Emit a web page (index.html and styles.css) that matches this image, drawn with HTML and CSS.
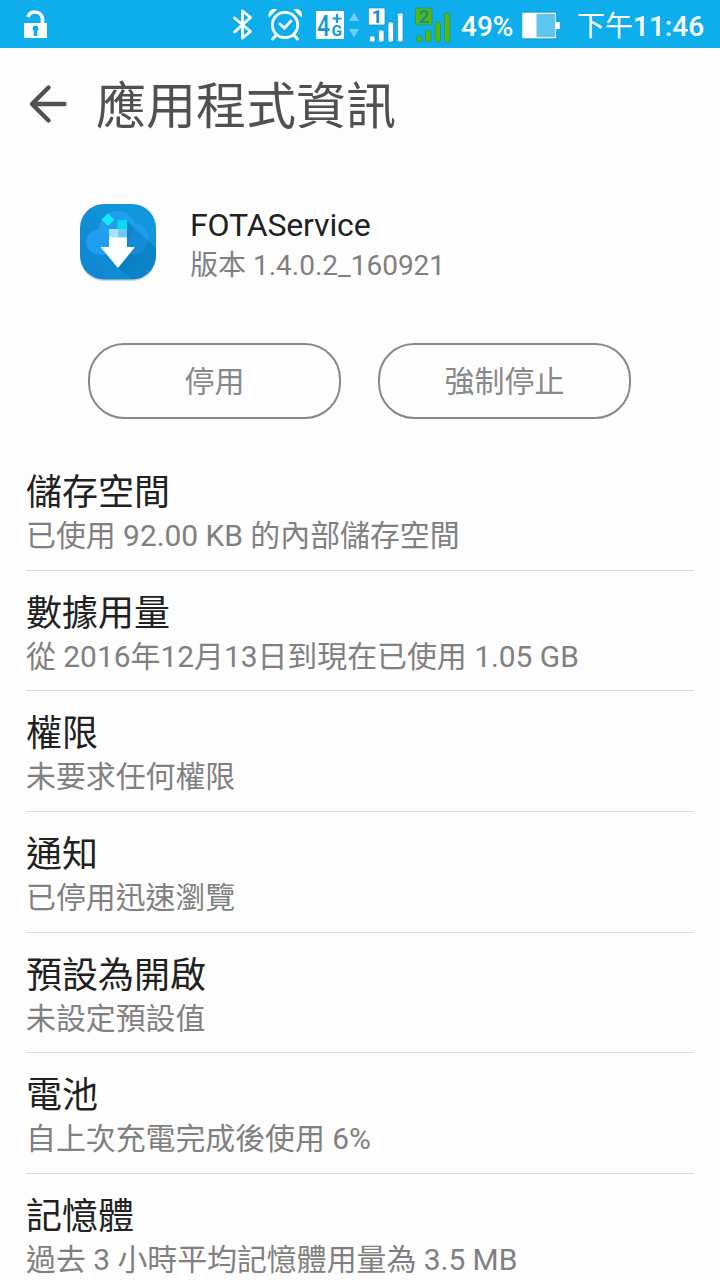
FILE: index.html
```html
<!DOCTYPE html>
<html lang="zh-Hant">
<head>
    <meta charset="utf-8">
    <title>應用程式資訊</title>
    <link rel="stylesheet" href="styles.css">
</head>
<body>
<div class="statusbar">
    <svg class="lock" width="26" height="48" viewBox="0 0 26 48">
        <path d="M5 17c1-3 3.500-5 6.500-5 4.500 0 8 3 8 7.500V24" fill="none" stroke="#fff" stroke-width="3.600"/>
        <path fill="#fff" fill-rule="evenodd" d="M1 23h23v15H1zM12.500 25.500a3 3 0 0 0-1.800 5.400V36h3.600v-5.100a3 3 0 0 0-1.800-5.400z"/>
    </svg>
    <svg class="bluetooth" width="24" height="48" viewBox="0 0 24 48">
        <path d="M3.500 18l16 13.500L11.500 38V11l8 6.500L3.500 32" fill="none" stroke="#fff" stroke-width="2.800" stroke-linejoin="round" stroke-linecap="round"/>
    </svg>
    <svg class="alarm" width="36" height="48" viewBox="0 0 36 48">
        <g fill="none" stroke="#fff" stroke-linecap="round">
            <circle cx="18" cy="25" r="12.700" stroke-width="2.800"/>
            <path d="M9 35.500L5.500 39M27 35.500l3.500 3.500" stroke-width="3"/>
            <path d="M13 24l4.500 4L24 21" stroke-width="2.800"/>
        </g>
        <path fill="#fff" d="M2 17.500c-2-5 2.500-10 8-8zM34.500 17.500c2-5-2.500-10-8-8z"/>
    </svg>
    <svg class="network" width="44" height="48" viewBox="0 0 44 48">
        <rect x="1" y="11" width="28" height="28" rx="1" fill="#fff"/>
        <g fill="#1499d0" class="tag">
            <text class="four" x="2" y="35.500" font-size="29" textLength="13" lengthAdjust="spacingAndGlyphs">4</text>
            <text x="16.500" y="36" font-size="15" textLength="10.500" lengthAdjust="spacingAndGlyphs">G</text>
        </g>
        <path d="M22 14v9M17.500 18.500h9" stroke="#1499d0" stroke-width="2.200"/>
        <path fill="#70cdf2" d="M34 21l5-8.500 5 8.500zM34 29h10l-5 8.500z"/>
    </svg>
    <svg class="signal" width="38" height="48" viewBox="0 0 38 48">
        <g fill="#fff" stroke="#168fc6" stroke-width=".7">
            <rect x="1.500" y="8" width="16.500" height="17" rx="1"/>
            <rect x="2.500" y="36" width="5.500" height="6" rx="2"/>
            <rect x="11.500" y="30" width="5.500" height="12" rx="2"/>
            <rect x="21" y="22" width="5.500" height="20" rx="2"/>
            <rect x="30.500" y="13" width="5.500" height="29" rx="2"/>
        </g>
        <text class="tag" x="4.500" y="23" font-size="19" fill="#1790c8">1</text>
    </svg>
    <svg class="signal signal2" width="38" height="48" viewBox="0 0 38 48">
        <g fill="#55b90c" stroke="#168f92" stroke-width=".7">
            <rect x="1.500" y="8" width="16.500" height="17" rx="1"/>
            <rect x="2.500" y="36" width="5.500" height="6" rx="2"/>
            <rect x="11.500" y="30" width="5.500" height="12" rx="2"/>
            <rect x="21" y="22" width="5.500" height="20" rx="2"/>
            <rect x="30.500" y="13" width="5.500" height="29" rx="2"/>
        </g>
        <text class="tag" x="4.500" y="23" font-size="19" fill="#168f92">2</text>
    </svg>
    <span class="percent">49%</span>
    <svg class="battery" width="40" height="48" viewBox="0 0 40 48">
        <path d="M.8 12.200h34.500v9.300h4v8h-4v9.300H.8z" fill="#fff" stroke="#168fc6" stroke-width=".8"/>
        <path fill="#5cc6ee" d="M15.500 14H34v23H15.500z"/>
    </svg>
    <span class="time"><span class="ampm">下午</span>11:46</span>
</div>

<div class="header">
    <svg width="40" height="40" viewBox="0 0 40 40">
        <path d="M21.500 3.500L5 20l16.500 16.500M6 20h31.500" fill="none" stroke="#505050" stroke-width="4.400" stroke-linecap="round" stroke-linejoin="round"/>
    </svg>
    <h1>應用程式資訊</h1>
</div>

<div class="app">
    <svg width="80" height="80" viewBox="0 0 80 80">
        <defs>
            <linearGradient id="bg" x1="0" y1="1" x2="1" y2="0">
                <stop offset="0" stop-color="#1085cf"/>
                <stop offset="1" stop-color="#109be0"/>
            </linearGradient>
            <linearGradient id="shade" x1="0" y1="0" x2="1" y2="1">
                <stop offset="0" stop-color="#0769a8"/>
                <stop offset="1" stop-color="#0b82c8"/>
            </linearGradient>
            <clipPath id="shape">
                <rect x="2" y="2" width="76" height="75.500" rx="24"/>
            </clipPath>
        </defs>
        <rect x="2.500" y="4" width="75" height="75" rx="23" fill="#b9bec3" opacity=".6"/>
        <rect x="2" y="2" width="76" height="75.500" rx="24" fill="url(#bg)"/>
        <g clip-path="url(#shape)">
            <path fill="#209ff0" d="M21 52.500a12.500 12.500 0 0 1-.5-25C22 17 29 9 39.500 9 48 9 54 14 57 21c8 1 13.500 7.500 13.500 15.500S65 52.500 56 52.500z"/>
            <path fill="url(#shade)" d="M49 19l31 29v32H58L40 66z" opacity=".6"/>
            <path fill="#1d96e4" d="M56 25.500V21c8 1 13.500 7.500 13.500 15.500S65 52.500 56 52.500H52L58 45H49z" opacity=".4"/>
        </g>
        <path fill="#10eafa" d="M30 11.500l6.500 6.200-6.500 6.300-6.500-6.300z"/>
        <path fill="#07dcef" d="M39.500 18H49v9h-9.500z"/>
        <path fill="#a9e2fc" d="M31 27h9v9h-9z"/>
        <path fill="#70c8f4" d="M40 27h9v9h-9z"/>
        <path fill="#fff" d="M31 35.500h18V45h8L40 66 22.500 45H31z"/>
    </svg>
    <div class="appinfo">
        <div class="appname">FOTAService</div>
        <div class="version">版本 1.4.0.2_160921</div>
    </div>
</div>

<div class="buttons">
    <button type="button">停用</button>
    <button type="button">強制停止</button>
</div>

<div class="list">
    <div class="item">
        <div class="title">儲存空間</div>
        <div class="summary">已使用 92.00 KB 的內部儲存空間</div>
    </div>
    <div class="item">
        <div class="title">數據用量</div>
        <div class="summary">從 2016年12月13日到現在已使用 1.05 GB</div>
    </div>
    <div class="item">
        <div class="title">權限</div>
        <div class="summary">未要求任何權限</div>
    </div>
    <div class="item">
        <div class="title">通知</div>
        <div class="summary">已停用迅速瀏覽</div>
    </div>
    <div class="item">
        <div class="title">預設為開啟</div>
        <div class="summary">未設定預設值</div>
    </div>
    <div class="item">
        <div class="title">電池</div>
        <div class="summary">自上次充電完成後使用 6%</div>
    </div>
    <div class="item">
        <div class="title">記憶體</div>
        <div class="summary">過去 3 小時平均記憶體用量為 3.5 MB</div>
    </div>
</div>
</body>
</html>
```

FILE: styles.css
```css
* {
    box-sizing: border-box;
}

body {
    margin: 0;
    height: 1280px;
    overflow: hidden;
    background-color: #fdfdfd;
    color: #212121;
    font-family: Roboto, "Noto Sans CJK TC", sans-serif;
}

svg {
    display: block;
    flex: none;
}

.statusbar {
    display: flex;
    height: 48px;
    background-color: #0eaeed;
    color: white;
    font-size: 28px;
    line-height: 54px;
    white-space: nowrap;
}

.tag {
    font-family: Roboto, sans-serif;
    font-weight: bold;
}

.four {
    font-weight: 500;
}

.lock {
    margin-left: 23px;
}

.bluetooth {
    margin-left: 182px;
}

.alarm {
    margin-left: 12px;
}

.network {
    margin-left: 12px;
}

.signal {
    margin-left: 8px;
}

.signal2 {
    margin-left: 9px;
}

.percent {
    width: 60px;
    margin-left: 9px;
    font-weight: 500;
}

.time {
    margin-left: 16px;
    font-weight: 500;
}

.ampm {
    font-weight: 400;
}

.header {
    display: flex;
    align-items: center;
    height: 112px;
    padding-left: 27px;
}

.header h1 {
    margin: 6px 0 0 29px;
    color: #505050;
    font-size: 50px;
    font-weight: 400;
    line-height: 60px;
}

.app {
    display: flex;
    height: 120px;
    margin-top: 42px;
    padding-left: 78px;
}

.appinfo {
    margin-left: 32px;
}

.appname {
    font-size: 32px;
    line-height: 46px;
    letter-spacing: -0.15px;
}

.version {
    color: #808080;
    font-size: 28px;
    line-height: 36px;
}

.buttons {
    display: flex;
    gap: 37px;
    margin-top: 21px;
    padding-left: 88px;
}

.buttons button {
    width: 253px;
    height: 76px;
    padding: 0 0 4px;
    border: 2px solid #888;
    border-radius: 36px;
    background: none;
    color: #888;
    font-family: inherit;
    font-size: 30px;
}

.list {
    margin-top: 31px;
    padding: 0 26px;
}

.item {
    height: 120.65px;
    padding-top: 20px;
    border-bottom: 1px solid #dcdcdc;
    white-space: nowrap;
}

.title {
    font-size: 36px;
    line-height: 46px;
}

.summary {
    color: #808080;
    font-size: 29.9px;
    line-height: 40px;
}
```
